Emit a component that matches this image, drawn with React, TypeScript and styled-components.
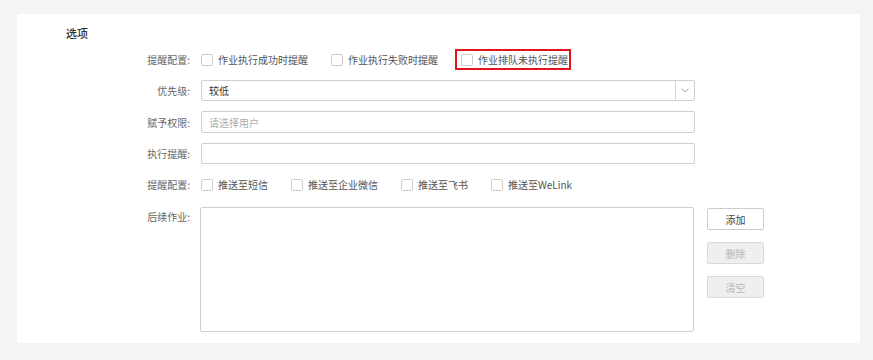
import styled, { createGlobalStyle } from "styled-components";

const GlobalStyle = createGlobalStyle`
  html, body {
    margin: 0;
    padding: 0;
    background: #f3f4f6;
  }
  body {
    font-family: "Noto Sans CJK SC", "Noto Sans", "Liberation Sans", sans-serif;
  }
  * {
    box-sizing: border-box;
  }
`;

const noticeOptions = ["作业执行成功时提醒", "作业执行失败时提醒"];
const pushOptions = ["推送至短信", "推送至企业微信", "推送至飞书", "推送至WeLink"];

export default function App() {
  return (
    <>
      <GlobalStyle />
      <Page>
        <Card>
          <Title>选项</Title>
          <Form>
            <Label>提醒配置:</Label>
            <CheckGroup>
              {noticeOptions.map((text) => (
                <CheckItem key={text}>
                  <Box />
                  <span>{text}</span>
                </CheckItem>
              ))}
              <Highlight>
                <CheckItem>
                  <Box />
                  <span>作业排队未执行提醒</span>
                </CheckItem>
              </Highlight>
            </CheckGroup>
            <Side />

            <Label>优先级:</Label>
            <Select>
              <SelectValue>较低</SelectValue>
              <SelectArrow>
                <svg width="8" height="5" viewBox="0 0 8 5">
                  <path d="M0.5 0.5 L4 4 L7.5 0.5" fill="none" stroke="#a9a9a9" strokeWidth="1" />
                </svg>
              </SelectArrow>
            </Select>
            <Side />

            <Label>赋予权限:</Label>
            <Input placeholder="请选择用户" />
            <Side />

            <Label>执行提醒:</Label>
            <Input />
            <Side />

            <Label>提醒配置:</Label>
            <CheckGroup>
              {pushOptions.map((text) => (
                <CheckItem key={text}>
                  <Box />
                  <span>{text}</span>
                </CheckItem>
              ))}
            </CheckGroup>
            <Side />

            <Label $top>后续作业:</Label>
            <TextArea />
            <Buttons>
              <Button>添加</Button>
              <Button disabled>删除</Button>
              <Button disabled>清空</Button>
            </Buttons>
          </Form>
        </Card>
      </Page>
    </>
  );
}

const Page = styled.div`
  width: 873px;
  height: 360px;
  padding: 14px 13px 17px 17px;
`;

const Card = styled.div`
  background: #ffffff;
  border-radius: 3px;
  height: 100%;
  padding: 11px 0 0 49px;
`;

const Title = styled.div`
  font-size: 11px;
  line-height: 16px;
  color: #333333;
  font-weight: 500;
`;

const Form = styled.div`
  display: grid;
  grid-template-columns: 125px 494px 57px;
  grid-template-rows: 21px 21px 22px 21px 21px 127px;
  column-gap: 10px;
  row-gap: 10px;
  margin-top: 8px;
  & > *:nth-last-child(-n + 3) {
    margin-top: 2px;
  }
`;

const Label = styled.div<{ $top?: boolean }>`
  font-size: 10px;
  color: #666666;
  text-align: right;
  display: flex;
  justify-content: flex-end;
  align-items: ${(p) => (p.$top ? "flex-start" : "center")};
  padding-top: ${(p) => (p.$top ? "2px" : "0")};
  padding-right: 1px;
`;

const Side = styled.div``;

const CheckGroup = styled.div`
  display: flex;
  align-items: center;
  gap: 23px;
`;

const CheckItem = styled.label`
  display: flex;
  align-items: center;
  gap: 5px;
  font-size: 10px;
  color: #555555;
  white-space: nowrap;
`;

const Box = styled.span`
  width: 12px;
  height: 12px;
  border: 1px solid #cccccc;
  border-radius: 2px;
  background: #ffffff;
`;

const Highlight = styled.div`
  height: 21px;
  display: flex;
  align-items: center;
  border: 2px solid #e3141c;
  padding: 0 1px 0 4px;
  margin: 0 -3px 0 -6px;
`;

const Select = styled.div`
  display: flex;
  border: 1px solid #cfcfcf;
  border-radius: 2px;
  background: #ffffff;
`;

const SelectValue = styled.div`
  flex: 1;
  display: flex;
  align-items: center;
  padding-left: 7px;
  font-size: 10px;
  color: #333333;
`;

const SelectArrow = styled.div`
  width: 19px;
  border-left: 1px solid #d6d6d6;
  display: flex;
  align-items: center;
  justify-content: center;
`;

const Input = styled.input`
  border: 1px solid #cfcfcf;
  border-radius: 2px;
  padding: 0 7px;
  font-size: 10px;
  font-family: inherit;
  color: #333333;
  outline: none;
  &::placeholder {
    color: #ababab;
  }
`;

const TextArea = styled.textarea`
  border: 1px solid #cfcfcf;
  border-radius: 2px;
  resize: none;
  outline: none;
  margin-left: -1px;
  width: 494px;
`;

const Buttons = styled.div`
  display: flex;
  flex-direction: column;
  gap: 12px;
  margin-left: 2px;
  padding-top: 1px;
`;

const Button = styled.button`
  width: 57px;
  height: 22px;
  border: 1px solid ${(p) => (p.disabled ? "#d9d9d9" : "#cccccc")};
  border-radius: 2px;
  background: ${(p) => (p.disabled ? "#efefef" : "#ffffff")};
  color: ${(p) => (p.disabled ? "#b8b8b8" : "#444444")};
  font-size: 10px;
  font-family: inherit;
  padding: 0;
`;
